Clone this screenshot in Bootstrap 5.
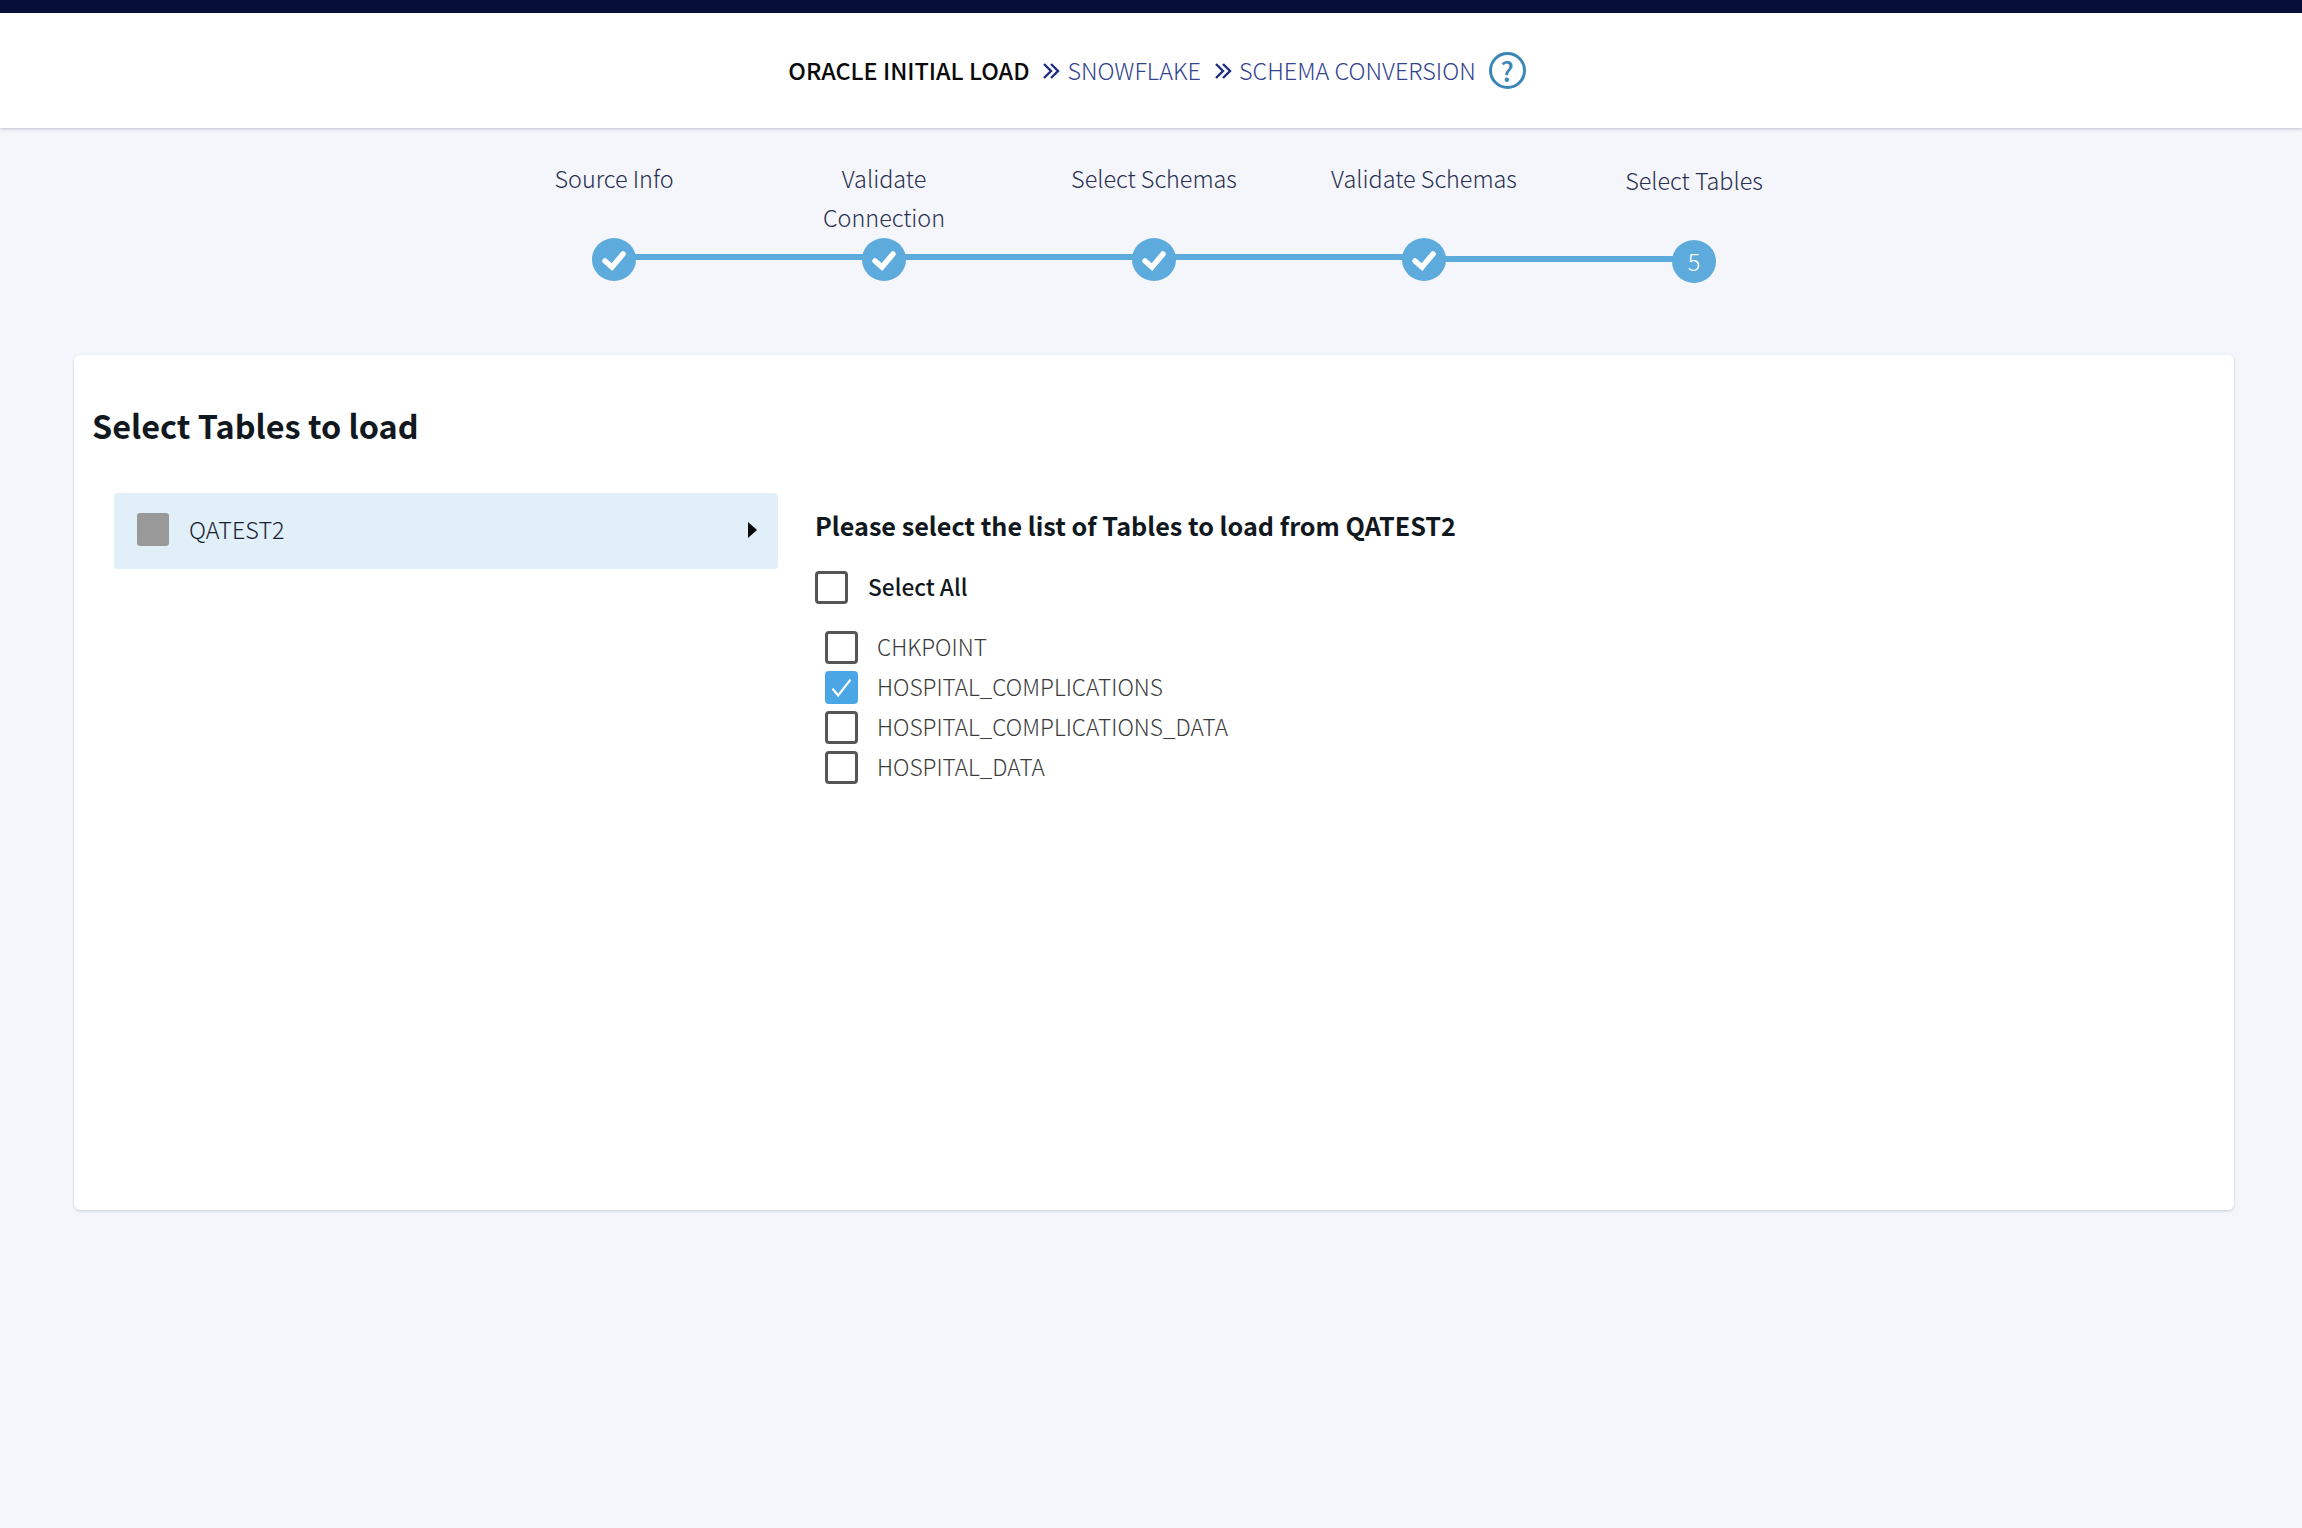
<!DOCTYPE html>
<html lang="en">
<head>
  <meta charset="UTF-8">
  <meta name="viewport" content="width=device-width, initial-scale=1.0">
  <title>Select Tables to load</title>
  <link href="https://cdn.jsdelivr.net/npm/bootstrap@5.3.2/dist/css/bootstrap.min.css" rel="stylesheet">
  <style>
    body {
      background: #f4f6fb;
      min-height: 1528px;
      font-family: "Noto Sans CJK JP", "Source Sans Pro", "Open Sans", sans-serif;
      font-weight: 300;
      color: #2a3150;
    }
    .top-strip { height: 13px; background: #060f38; }
    .page-head {
      height: 115px;
      background: #fff;
      box-shadow: 0 1px 3px rgba(30, 40, 70, .25);
      font-size: 23.4px;
      padding-left: 12px;
    }
    .crumb-main { font-weight: 500; color: #0a0a0a; }
    .crumb-link { color: #34438e; }
    .crumb-sep { width: 18px; height: 18px; margin: 0 7px 0 13px; }
    .help-ring {
      width: 37px;
      height: 37px;
      margin-left: 13px;
      border: 3px solid #3a86b7;
      border-radius: 50%;
      color: #3a86b7;
      font-size: 27px;
      font-weight: 500;
      line-height: 1;
    }
    .stepper { padding-top: 31px; padding-left: 6px; height: 227px; }
    .step-item { width: 270px; position: relative; }
    .step-item.is-last { top: 2px; }
    .step-label { height: 78px; font-size: 23.4px; line-height: 39px; color: #2a3150; }
    .step-dot {
      width: 44px;
      height: 43px;
      margin-top: 1px;
      background: #5daadd;
      color: #fff;
      border-radius: 50%;
      font-size: 23.4px;
      position: relative;
      z-index: 1;
    }
    .step-item:not(:first-child)::before {
      content: "";
      position: absolute;
      left: -135px;
      width: 270px;
      top: 95px;
      height: 6px;
      background: #5daadd;
    }
    .panel-card {
      margin: 0 68px 0 74px;
      height: 855px;
      background: #fff;
      border-radius: 6px;
      box-shadow: 0 1px 3px rgba(30, 40, 70, .2);
      padding: 0 18px;
    }
    .panel-title { font-size: 32.4px; font-weight: 700; color: #111820; padding-top: 45px; line-height: 50px; margin: 0 0 43px; }
    .schema-col { width: 664px; margin-left: 22px; }
    .schema-row {
      height: 76px;
      background: #e1eff9;
      border-radius: 4px;
      padding: 0 21px 3px 23px;
      font-size: 23.4px;
      color: #1a1f30;
    }
    .schema-box { width: 32px; height: 33px; background: #999; border-radius: 3px; margin-right: 20px; }
    .schema-caret { width: 0; height: 0; border-left: 9px solid #0a0a0a; border-top: 8px solid transparent; border-bottom: 8px solid transparent; }
    .tables-col { margin-left: 37px; }
    .tables-title { font-size: 25.2px; font-weight: 700; color: #111820; line-height: 40px; margin: 12px 0 25px; }
    .check-box.form-check-input {
      width: 33px;
      height: 33px;
      margin: 0;
      border: 3px solid #555;
      border-radius: 4px;
      flex: none;
    }
    .check-box.form-check-input:checked {
      background-color: #4ba6e6;
      border-color: #4ba6e6;
      background-image: url("data:image/svg+xml,%3csvg xmlns='http://www.w3.org/2000/svg' viewBox='0 0 24 24'%3e%3cpath fill='none' stroke='%23fff' stroke-width='2' d='M4 13l5 6L20 5'/%3e%3c/svg%3e");
    }
    .select-all { font-size: 22.7px; font-weight: 500; color: #111820; gap: 20px; margin-bottom: 23px; }
    .table-list { margin-left: 10px; font-size: 22.6px; color: #3c3c3c; }
    .table-row { height: 40px; gap: 19px; }
  </style>
</head>
<body>
  <div class="top-strip"></div>
  <div class="page-head d-flex align-items-center justify-content-center">
    <span class="crumb-main">ORACLE INITIAL LOAD</span>
    <svg class="crumb-sep" viewBox="0 0 18 18"><path fill="none" stroke="#1c2f80" stroke-width="2.4" d="M2 2l7 7-7 7M9 2l7 7-7 7"/></svg>
    <span class="crumb-link">SNOWFLAKE</span>
    <svg class="crumb-sep" viewBox="0 0 18 18"><path fill="none" stroke="#1c2f80" stroke-width="2.4" d="M2 2l7 7-7 7M9 2l7 7-7 7"/></svg>
    <span class="crumb-link">SCHEMA CONVERSION</span>
    <span class="help-ring d-flex align-items-center justify-content-center">?</span>
  </div>

  <div class="stepper d-flex justify-content-center">
    <div class="step-item text-center">
      <div class="step-label">Source Info</div>
      <div class="step-dot d-flex align-items-center justify-content-center mx-auto">
        <svg width="28" height="28" viewBox="0 0 28 28"><path fill="none" stroke="#fff" stroke-width="5.5" stroke-linecap="round" d="M5 15l7 6L23 8"/></svg>
      </div>
    </div>
    <div class="step-item text-center">
      <div class="step-label">Validate<br>Connection</div>
      <div class="step-dot d-flex align-items-center justify-content-center mx-auto">
        <svg width="28" height="28" viewBox="0 0 28 28"><path fill="none" stroke="#fff" stroke-width="5.5" stroke-linecap="round" d="M5 15l7 6L23 8"/></svg>
      </div>
    </div>
    <div class="step-item text-center">
      <div class="step-label">Select Schemas</div>
      <div class="step-dot d-flex align-items-center justify-content-center mx-auto">
        <svg width="28" height="28" viewBox="0 0 28 28"><path fill="none" stroke="#fff" stroke-width="5.5" stroke-linecap="round" d="M5 15l7 6L23 8"/></svg>
      </div>
    </div>
    <div class="step-item text-center">
      <div class="step-label">Validate Schemas</div>
      <div class="step-dot d-flex align-items-center justify-content-center mx-auto">
        <svg width="28" height="28" viewBox="0 0 28 28"><path fill="none" stroke="#fff" stroke-width="5.5" stroke-linecap="round" d="M5 15l7 6L23 8"/></svg>
      </div>
    </div>
    <div class="step-item is-last text-center">
      <div class="step-label">Select Tables</div>
      <div class="step-dot d-flex align-items-center justify-content-center mx-auto">5</div>
    </div>
  </div>

  <div class="panel-card">
    <h2 class="panel-title">Select Tables to load</h2>
    <div class="d-flex">
      <div class="schema-col">
        <div class="schema-row d-flex align-items-center">
          <span class="schema-box"></span>
          <span class="flex-grow-1">QATEST2</span>
          <span class="schema-caret"></span>
        </div>
      </div>
      <div class="tables-col">
        <h3 class="tables-title">Please select the list of Tables to load from QATEST2</h3>
        <label class="select-all d-flex align-items-center">
          <input class="form-check-input check-box" type="checkbox">
          <span>Select All</span>
        </label>
        <div class="table-list">
          <label class="table-row d-flex align-items-center"><input class="form-check-input check-box" type="checkbox"><span>CHKPOINT</span></label>
          <label class="table-row d-flex align-items-center"><input class="form-check-input check-box" type="checkbox" checked><span>HOSPITAL_COMPLICATIONS</span></label>
          <label class="table-row d-flex align-items-center"><input class="form-check-input check-box" type="checkbox"><span>HOSPITAL_COMPLICATIONS_DATA</span></label>
          <label class="table-row d-flex align-items-center"><input class="form-check-input check-box" type="checkbox"><span>HOSPITAL_DATA</span></label>
        </div>
      </div>
    </div>
  </div>

  <script src="https://cdn.jsdelivr.net/npm/bootstrap@5.3.2/dist/js/bootstrap.bundle.min.js"></script>
</body>
</html>
